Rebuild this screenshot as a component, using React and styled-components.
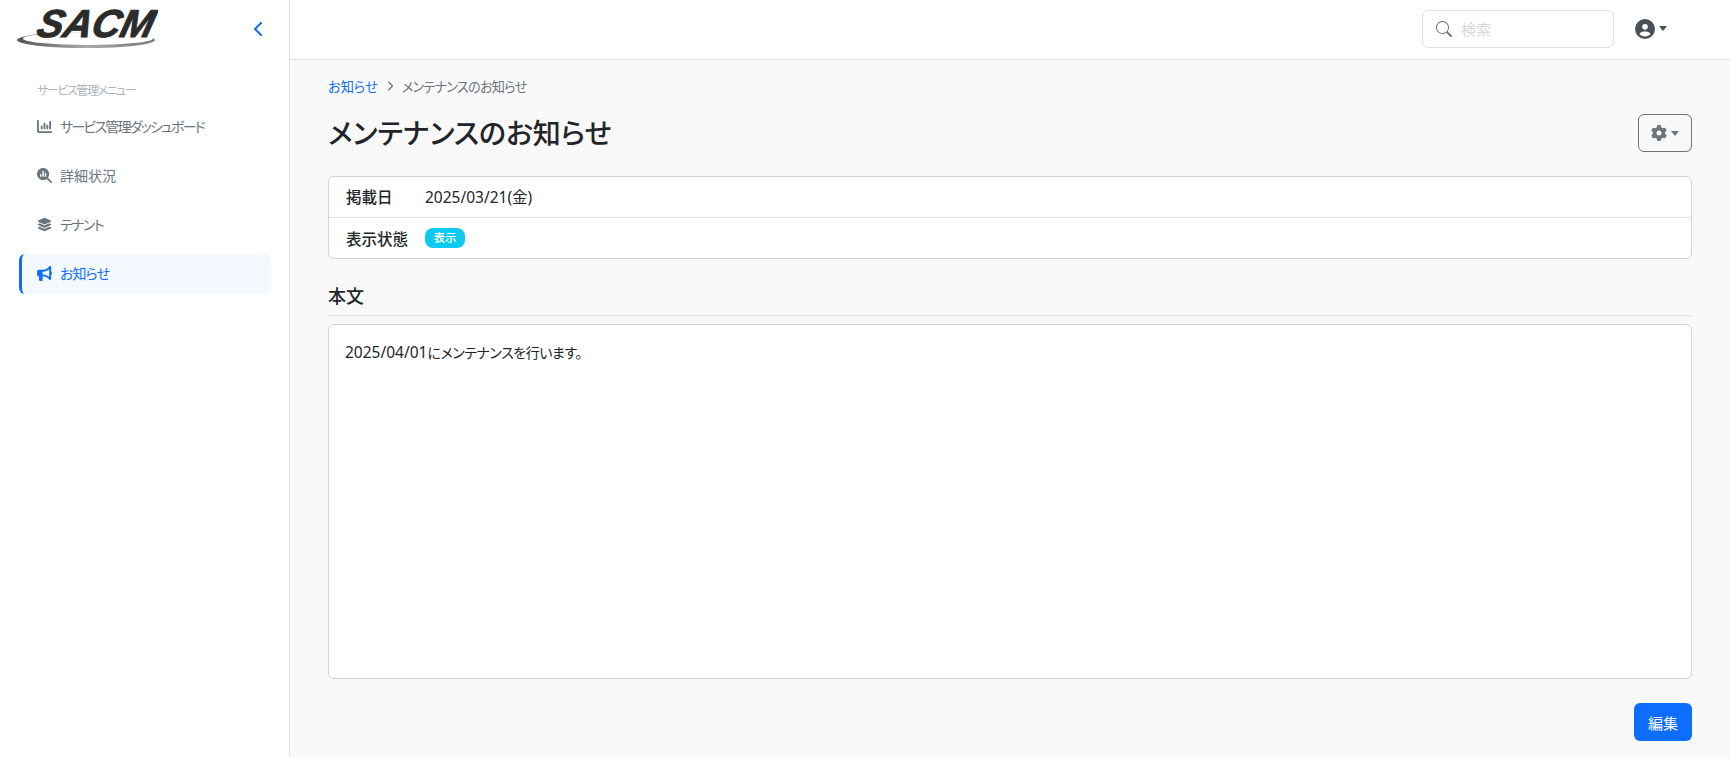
import React from "react";
import styled, { createGlobalStyle } from "styled-components";
import {
  FaBullhorn,
  FaChartColumn,
  FaChevronLeft,
  FaChevronRight,
  FaCircleUser,
  FaGear,
  FaLayerGroup,
  FaMagnifyingGlassChart,
} from "react-icons/fa6";
import { BsSearch } from "react-icons/bs";

const GlobalStyle = createGlobalStyle`
  html, body {
    margin: 0;
    padding: 0;
    height: 100%;
    background: #f9f9f9;
    overflow: hidden;
  }
  body {
    font-family: "Noto Sans", "Noto Sans CJK JP", sans-serif;
    font-size: 14px;
    color: #212529;
    font-feature-settings: "palt";
  }
  * {
    box-sizing: border-box;
  }
`;

const Page = styled.div`
  display: flex;
  width: 1730px;
  height: 757px;
`;

const Sidebar = styled.aside`
  width: 290px;
  flex-shrink: 0;
  height: 100%;
  background: #fff;
  border-right: 1px solid #dee2e6;
  display: flex;
  flex-direction: column;
`;

const Brand = styled.div`
  height: 59px;
  display: flex;
  justify-content: space-between;
  align-items: flex-start;
  padding: 0 22px 0 16px;
`;

const Collapse = styled.button`
  border: none;
  background: none;
  padding: 0;
  margin-top: 21px;
  color: #0d6efd;
  font-size: 16px;
  line-height: 1;
  display: flex;
`;

const MenuTitle = styled.div`
  margin: 22px 0 0 37px;
  height: 20px;
  line-height: 20px;
  font-size: 12px;
  letter-spacing: -1.4px;
  color: #adb5bd;
`;

const Menu = styled.nav`
  display: flex;
  flex-direction: column;
  gap: 9px;
  margin: 6px 18px 0 19px;
`;

const MenuItem = styled.a`
  height: 40px;
  display: flex;
  align-items: center;
  gap: 8px;
  padding: 0 0 2px 15px;
  font-size: 14px;
  border-radius: 6px;
  letter-spacing: ${(p) => p.$spacing}px;
  color: ${(p) => (p.$active ? "#0d6efd" : "#6c757d")};
  background: ${(p) => (p.$active ? "#f4f8ff" : "transparent")};
  border-left: 3px solid ${(p) => (p.$active ? "#0d6efd" : "transparent")};

  svg {
    font-size: 15px;
    flex-shrink: 0;
  }
`;

const Main = styled.div`
  flex: 1;
  min-width: 0;
  display: flex;
  flex-direction: column;
`;

const Topbar = styled.header`
  height: 60px;
  flex-shrink: 0;
  background: #fff;
  border-bottom: 1px solid #dee2e6;
  display: flex;
  justify-content: flex-end;
  align-items: center;
  gap: 21px;
  padding: 0 63px 2px 0;
`;

const Search = styled.div`
  width: 192px;
  height: 38px;
  background: #fff;
  border: 1px solid #dee2e6;
  border-radius: 6px;
  display: flex;
  align-items: center;
  gap: 9px;
  padding-left: 13px;
  color: #6c757d;
  font-size: 16px;
`;

const SearchInput = styled.input`
  border: none;
  outline: none;
  width: 120px;
  padding: 0;
  background: transparent;
  font-size: 15px;
  font-family: "Noto Sans CJK JP", sans-serif;
  &::placeholder {
    color: #d5d9dd;
  }
`;

const UserMenu = styled.div`
  display: flex;
  align-items: center;
  gap: 4px;
  color: #495057;
  font-size: 20px;
`;

const Caret = styled.span`
  width: 0;
  height: 0;
  border-style: solid;
  border-width: 5px 4px 0 4px;
  border-color: ${(p) => p.$color} transparent transparent transparent;
`;

const Content = styled.main`
  flex: 1;
  display: flex;
  flex-direction: column;
  padding: 16px 38px 16px 38px;
`;

const Breadcrumb = styled.div`
  display: flex;
  align-items: center;
  gap: 7px;
  height: 20px;
  font-size: 13.2px;
  color: #6c757d;
`;

const CrumbLink = styled.a`
  color: #0d6efd;
`;

const CrumbSep = styled.span`
  display: flex;
  font-size: 10px;
  color: #6c757d;
`;

const CrumbCurrent = styled.span`
  letter-spacing: -0.8px;
`;

const TitleRow = styled.div`
  display: flex;
  justify-content: space-between;
  align-items: center;
  height: 38px;
  margin-top: 18px;
`;

const Title = styled.h1`
  margin: 0;
  font-size: 28px;
  line-height: 38px;
  font-weight: 500;
  color: #212529;
`;

const GearButton = styled.button`
  width: 54px;
  height: 38px;
  background: transparent;
  border: 1px solid #6c757d;
  border-radius: 6px;
  color: #6c757d;
  font-size: 16px;
  display: flex;
  align-items: center;
  justify-content: center;
  gap: 4px;
  padding: 0;
`;

const InfoCard = styled.section`
  margin-top: 24px;
  background: #fff;
  border: 1px solid #ced4da;
  border-radius: 6px;
`;

const InfoRow = styled.div`
  height: 40px;
  display: flex;
  align-items: center;
  padding: 0 0 1px 17px;
  & + & {
    height: 41px;
    padding-bottom: 0;
    border-top: 1px solid #dee2e6;
  }
`;

const InfoLabel = styled.div`
  width: 79px;
  font-weight: 500;
  font-size: 15.5px;
`;

const InfoValue = styled.div`
  font-size: 15.5px;
`;

const Badge = styled.span`
  display: inline-block;
  background: #0dcaf0;
  color: #fff;
  font-size: 11.5px;
  font-weight: 500;
  line-height: 20px;
  height: 20px;
  width: 40px;
  text-align: center;
  border-radius: 8px;
`;

const SectionTitle = styled.h2`
  margin: 26px 0 0;
  height: 31px;
  line-height: 22px;
  font-size: 18px;
  font-weight: 500;
  border-bottom: 1px solid #dee2e6;
`;

const BodyCard = styled.section`
  flex: 1;
  margin-top: 8px;
  background: #fff;
  border: 1px solid #ced4da;
  border-radius: 6px;
  padding: 17px 16px;
  font-size: 14px;
  line-height: 21px;
  letter-spacing: -0.46px;
`;

const DateText = styled.span`
  font-size: 15.5px;
  letter-spacing: 0;
`;

const Footer = styled.div`
  display: flex;
  justify-content: flex-end;
  margin-top: 24px;
`;

const EditButton = styled.button`
  width: 58px;
  height: 38px;
  background: #0d6efd;
  border: none;
  border-radius: 6px;
  color: #fff;
  font-family: inherit;
  font-size: 15px;
  font-weight: 400;
  padding: 0;
`;

const Logo = () => (
  <svg width="142" height="50" viewBox="0 0 142 50">
    <defs>
      <linearGradient id="ring" x1="0" y1="0" x2="1" y2="0">
        <stop offset="0" stopColor="#555" />
        <stop offset="0.5" stopColor="#aaa" />
        <stop offset="1" stopColor="#777" />
      </linearGradient>
    </defs>
    <ellipse cx="70" cy="40" rx="69" ry="8" fill="url(#ring)" />
    <ellipse cx="72" cy="38.5" rx="65" ry="6.5" fill="#fff" />
    <text
      transform="translate(77 37) skewX(-14)"
      textAnchor="middle"
      fontFamily="Liberation Sans, sans-serif"
      fontWeight="700"
      fontStyle="italic"
      fontSize="39"
      textLength="116"
      lengthAdjust="spacingAndGlyphs"
      fill="#2b2b2b"
      stroke="#2b2b2b"
      strokeWidth="1"
    >
      SACM
    </text>
  </svg>
);

const menuItems = [
  { label: "サービス管理ダッシュボード", icon: <FaChartColumn />, spacing: -1.8 },
  { label: "詳細状況", icon: <FaMagnifyingGlassChart />, spacing: 0 },
  { label: "テナント", icon: <FaLayerGroup />, spacing: -1.6 },
  { label: "お知らせ", icon: <FaBullhorn />, spacing: -0.9, active: true },
];

export default function App() {
  return (
    <>
      <GlobalStyle />
      <Page>
        <Sidebar>
          <Brand>
            <Logo />
            <Collapse aria-label="閉じる">
              <FaChevronLeft />
            </Collapse>
          </Brand>
          <MenuTitle>サービス管理メニュー</MenuTitle>
          <Menu>
            {menuItems.map((item) => (
              <MenuItem key={item.label} $active={item.active} $spacing={item.spacing}>
                {item.icon}
                {item.label}
              </MenuItem>
            ))}
          </Menu>
        </Sidebar>
        <Main>
          <Topbar>
            <Search>
              <BsSearch />
              <SearchInput placeholder="検索" />
            </Search>
            <UserMenu>
              <FaCircleUser />
              <Caret $color="#495057" />
            </UserMenu>
          </Topbar>
          <Content>
            <Breadcrumb>
              <CrumbLink>お知らせ</CrumbLink>
              <CrumbSep>
                <FaChevronRight />
              </CrumbSep>
              <CrumbCurrent>メンテナンスのお知らせ</CrumbCurrent>
            </Breadcrumb>
            <TitleRow>
              <Title>メンテナンスのお知らせ</Title>
              <GearButton aria-label="設定">
                <FaGear />
                <Caret $color="#6c757d" />
              </GearButton>
            </TitleRow>
            <InfoCard>
              <InfoRow>
                <InfoLabel>掲載日</InfoLabel>
                <InfoValue>2025/03/21(金)</InfoValue>
              </InfoRow>
              <InfoRow>
                <InfoLabel>表示状態</InfoLabel>
                <Badge>表示</Badge>
              </InfoRow>
            </InfoCard>
            <SectionTitle>本文</SectionTitle>
            <BodyCard>
              <DateText>2025/04/01</DateText>にメンテナンスを行います。
            </BodyCard>
            <Footer>
              <EditButton>編集</EditButton>
            </Footer>
          </Content>
        </Main>
      </Page>
    </>
  );
}
